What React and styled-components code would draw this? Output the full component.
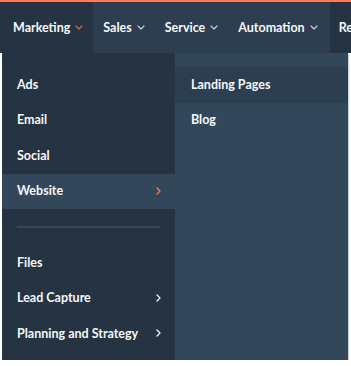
import React from 'react'
import styled, {createGlobalStyle} from 'styled-components'

const ORANGE = '#ff7a59'
const DARK = '#253342'
const MID = '#2d3e50'
const LIGHT = '#33475b'
const TEXT = '#f5f8fa'

const Global = createGlobalStyle`
  html, body {
    margin: 0;
    background: #fff;
  }
  body {
    font-family: Lato, "Open Sans", sans-serif;
    -webkit-font-smoothing: antialiased;
  }
`

const Strip = styled.div`
  height: 2px;
  background: ${ORANGE};
`

const NavBar = styled.nav`
  display: flex;
  height: 51px;
  background: ${DARK};
  overflow: hidden;
`

const Tab = styled.div`
  display: flex;
  align-items: center;
  gap: 5px;
  padding: 0 ${p => p.$right || 10}px 1px ${p => p.$left || 10}px;
  background: ${p => (p.$light ? MID : DARK)};
  color: ${TEXT};
  font-size: 12.5px;
  font-weight: 700;
  white-space: nowrap;
`

const TabGroup = styled.div`
  display: flex;
  background: ${MID};
`

const Dropdown = styled.div`
  display: flex;
  width: 346px;
  margin-left: 2px;
  box-shadow: 1px 1px 1px #cbd6e2;
`

const Column = styled.div`
  width: 173px;
  padding: 14px 0 8.5px;
  background: ${DARK};
`

const Panel = styled.div`
  flex: 1;
  padding-top: 14px;
  background: ${LIGHT};
`

const Item = styled.div`
  display: flex;
  align-items: center;
  justify-content: space-between;
  height: 35.5px;
  padding: 0 14px 1.5px ${p => p.$indent || 15}px;
  box-sizing: border-box;
  background: ${p => p.$bg || 'transparent'};
  color: ${TEXT};
  font-size: 12.5px;
  font-weight: 700;
`

const Divider = styled.div`
  display: flex;
  align-items: center;
  height: 36px;
  padding: 0 15px;

  &::after {
    content: '';
    flex: 1;
    height: 2px;
    background: ${LIGHT};
  }
`

const Down = ({color = '#cbd6e2'}) => (
  <svg width="8" height="5" viewBox="0 0 8 5">
    <path d="M1 1l3 3 3-3" fill="none" stroke={color} strokeWidth="1.1" strokeLinecap="round" strokeLinejoin="round" />
  </svg>
)

const Right = ({color = TEXT}) => (
  <svg width="5" height="8" viewBox="0 0 5 8">
    <path d="M1 1l3 3-3 3" fill="none" stroke={color} strokeWidth="1.3" strokeLinecap="round" strokeLinejoin="round" />
  </svg>
)

export default function App() {
  return (
    <>
      <Global />
      <Strip />
      <NavBar>
        <Tab $left={13}>Marketing <Down color="#e0685a" /></Tab>
        <TabGroup>
          <Tab $light>Sales <Down /></Tab>
          <Tab $light>Service <Down /></Tab>
          <Tab $light $right={12}>Automation <Down /></Tab>
        </TabGroup>
        <Tab $left={9}>Reports <Down /></Tab>
      </NavBar>
      <Dropdown>
        <Column>
          <Item>Ads</Item>
          <Item>Email</Item>
          <Item>Social</Item>
          <Item $bg={LIGHT}>Website <Right color={ORANGE} /></Item>
          <Divider />
          <Item>Files</Item>
          <Item>Lead Capture <Right /></Item>
          <Item>Planning and Strategy <Right /></Item>
        </Column>
        <Panel>
          <Item $indent={16} $bg={MID}>Landing Pages</Item>
          <Item $indent={16}>Blog</Item>
        </Panel>
      </Dropdown>
    </>
  )
}
